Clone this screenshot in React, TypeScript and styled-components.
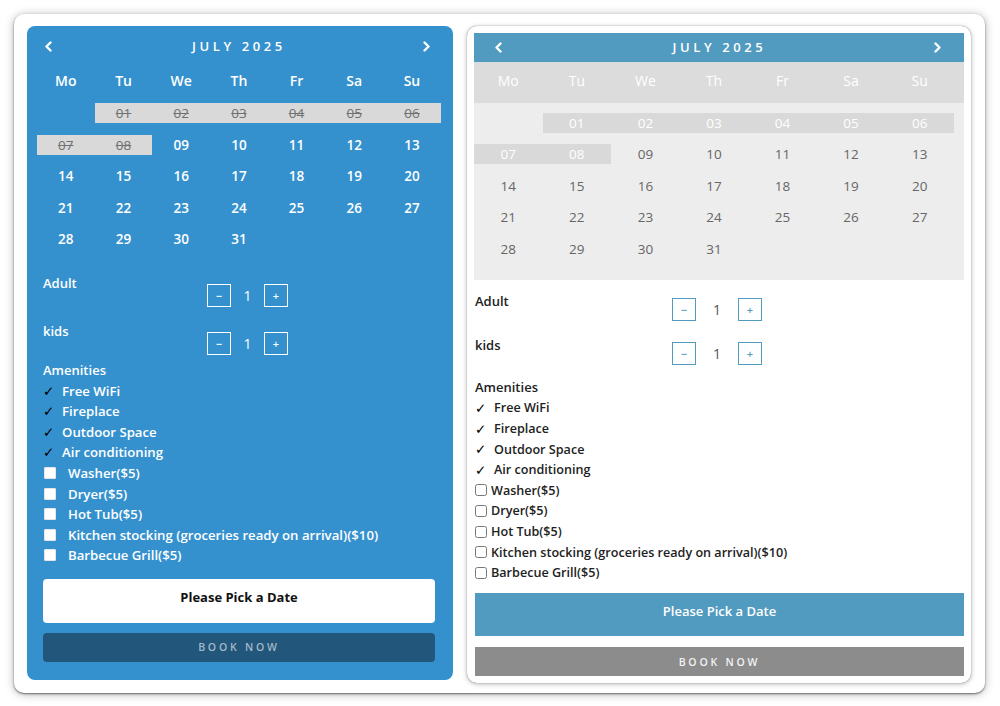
import React from "react";
import styled, { createGlobalStyle, css } from "styled-components";

type V = "blue" | "light";

const Global = createGlobalStyle`
  html, body { margin: 0; padding: 0; background: #fff; }
  body { font-family: "Open Sans", "Liberation Sans", sans-serif; }
  * { box-sizing: border-box; }
`;

const Frame = styled.div`
  margin: 14px;
  width: 971px;
  height: 679px;
  border-radius: 10px;
  background: #fff;
  box-shadow: 0 1px 2px rgba(0, 0, 0, 0.5), 0 1px 10px rgba(0, 0, 0, 0.3);
  padding: 12px 14px 10px 13px;
  display: flex;
  gap: 14px;
  align-items: flex-start;
`;

const Panel = styled.div<{ $v: V }>`
  display: flex;
  flex-direction: column;
  ${(p) =>
    p.$v === "blue"
      ? css`
          width: 426px;
          height: 654px;
          background: #3591ce;
          border-radius: 8px;
          padding: 11px 12px 19px 10px;
          color: #fff;
        `
      : css`
          width: 504px;
          height: 657px;
          background: #fff;
          border-radius: 10px;
          box-shadow: 0 0 1px rgba(0, 0, 0, 0.5), 0 1px 5px rgba(0, 0, 0, 0.3);
          padding: 7px;
          color: #222;
        `}
`;

const CalHeader = styled.div<{ $v: V }>`
  display: flex;
  align-items: center;
  justify-content: space-between;
  ${(p) =>
    p.$v === "blue"
      ? css`
          width: 404px;
          height: 24px;
          padding: 0 10px 0 7px;
        `
      : css`
          height: 29px;
          background: #529bc0;
          color: #fff;
          padding: 0 22px 0 20px;
        `}
`;

const Title = styled.div`
  font-size: 13px;
  font-weight: 600;
  letter-spacing: 3.6px;
  padding-left: 3px;
`;

const Chevron = styled.svg`
  width: 9px;
  height: 11px;
  display: block;
`;

const WeekRow = styled.div<{ $v: V }>`
  display: grid;
  align-items: center;
  justify-items: center;
  font-size: 14px;
  ${(p) =>
    p.$v === "blue"
      ? css`
          grid-template-columns: repeat(7, 57.7px);
          height: 20px;
          margin-top: 15.5px;
          font-weight: 600;
        `
      : css`
          grid-template-columns: repeat(7, 68.57px);
          height: 42px;
          padding-bottom: 3px;
          background: #dcdcdc;
          color: #fff;
          font-weight: 500;
        `}
`;

const DaysGrid = styled.div<{ $v: V }>`
  display: grid;
  grid-auto-rows: 20px;
  row-gap: 11.5px;
  ${(p) =>
    p.$v === "blue"
      ? css`
          grid-template-columns: repeat(7, 57.7px);
          margin-top: 13.5px;
        `
      : css`
          grid-template-columns: repeat(7, 68.57px);
          background: #ededed;
          padding: 10px 10px 21px 0;
        `}
`;

const Day = styled.div<{ $v: V; $off?: boolean }>`
  display: flex;
  align-items: center;
  justify-content: center;
  font-size: 13.5px;
  font-weight: 600;
  ${(p) =>
    p.$v === "blue"
      ? css`
          color: #fff;
        `
      : css`
          color: #666;
          font-weight: 500;
        `}
  ${(p) =>
    p.$off &&
    (p.$v === "blue"
      ? css`
          background: #d9d9d9;
          color: #707070;
          text-decoration: line-through;
          font-weight: 500;
        `
      : css`
          background: #d9d9d9;
          color: #fff;
        `)}
`;

const Form = styled.div<{ $v: V }>`
  display: flex;
  flex-direction: column;
  ${(p) =>
    p.$v === "blue"
      ? css`
          padding: 0 6px;
          margin-top: 25px;
        `
      : css`
          margin-top: 13px;
          padding-left: 1px;
        `}
`;

const FieldRow = styled.div<{ $v: V }>`
  display: grid;
  align-items: start;
  ${(p) =>
    p.$v === "blue"
      ? css`
          grid-template-columns: 164px auto;
          & + & {
            margin-top: 8.5px;
          }
        `
      : css`
          grid-template-columns: 197px auto;
          & + & {
            margin-top: 15.5px;
          }
        `}
`;

const Label = styled.div<{ $v: V }>`
  font-size: 13px;
  font-weight: 600;
  line-height: 17px;
  padding-top: ${(p) => (p.$v === "blue" ? "1px" : "0")};
`;

const Stepper = styled.div<{ $v: V }>`
  display: flex;
  align-items: center;
  margin-top: ${(p) => (p.$v === "blue" ? "9.5px" : "5.5px")};
`;

const StepBtn = styled.div<{ $v: V }>`
  width: 24px;
  height: 23px;
  display: flex;
  align-items: center;
  justify-content: center;
  font-size: 11px;
  font-weight: 600;
  ${(p) =>
    p.$v === "blue"
      ? css`
          border: 1px solid #fff;
          color: #fff;
        `
      : css`
          border: 1px solid #529bc0;
          color: #529bc0;
        `}
`;

const StepVal = styled.div<{ $v: V }>`
  text-align: center;
  font-size: 14px;
  ${(p) =>
    p.$v === "blue"
      ? css`
          width: 33px;
          color: #fff;
        `
      : css`
          width: 42px;
          color: #555;
        `}
`;

const AmenTitle = styled.div<{ $v: V }>`
  font-size: 13px;
  font-weight: 600;
  line-height: 20.6px;
  margin-top: ${(p) => (p.$v === "blue" ? "5.2px" : "11.7px")};
`;

const Item = styled.div<{ $v: V }>`
  display: flex;
  align-items: center;
  height: 20.6px;
  font-size: ${(p) => (p.$v === "blue" ? "13.2px" : "12.6px")};
  font-weight: 600;
`;

const Check = styled.span`
  width: 19px;
  color: #000;
  font-family: "DejaVu Sans", sans-serif;
  font-size: 13.5px;
  font-weight: 700;
`;

const Box = styled.input<{ $v: V }>`
  width: 12px;
  height: 12px;
  margin: 0;
  ${(p) =>
    p.$v === "blue"
      ? css`
          margin-left: 1px;
          margin-right: 12px;
          appearance: none;
          background: #fff;
          border: 1px solid #e6e6e6;
          border-radius: 1px;
        `
      : css`
          margin-right: 4px;
        `}
`;

const PickBtn = styled.div<{ $v: V }>`
  display: flex;
  justify-content: center;
  font-size: 13px;
  ${(p) =>
    p.$v === "blue"
      ? css`
          margin-top: 13.2px;
          height: 44px;
          background: #fff;
          color: #111;
          border-radius: 4px;
          padding-top: 9px;
          font-weight: 700;
        `
      : css`
          margin-top: 10px;
          height: 43px;
          background: #529bc0;
          color: #fff;
          padding-top: 9px;
          font-weight: 600;
        `}
`;

const BookBtn = styled.div<{ $v: V }>`
  display: flex;
  align-items: center;
  justify-content: center;
  height: 29px;
  font-size: 10.5px;
  font-weight: 600;
  letter-spacing: 2.8px;
  ${(p) =>
    p.$v === "blue"
      ? css`
          margin-top: 10px;
          background: #22567a;
          color: #a3b9cb;
          border-radius: 4px;
        `
      : css`
          margin-top: 11px;
          background: #8c8c8c;
          color: #f2f2f2;
        `}
`;

const weekdays = ["Mo", "Tu", "We", "Th", "Fr", "Sa", "Su"];
const included = ["Free WiFi", "Fireplace", "Outdoor Space", "Air conditioning"];
const extras = [
  "Washer($5)",
  "Dryer($5)",
  "Hot Tub($5)",
  "Kitchen stocking (groceries ready on arrival)($10)",
  "Barbecue Grill($5)",
];

const pad = (n: number) => (n < 10 ? `0${n}` : `${n}`);

const ChevronIcon: React.FC<{ dir: "l" | "r" }> = ({ dir }) => (
  <Chevron viewBox="0 0 9 11">
    <path
      d={dir === "l" ? "M6.5 1.5 L2.5 5.5 L6.5 9.5" : "M2.5 1.5 L6.5 5.5 L2.5 9.5"}
      fill="none"
      stroke="#fff"
      strokeWidth="2.4"
      strokeLinecap="round"
      strokeLinejoin="round"
    />
  </Chevron>
);

const Booking: React.FC<{ v: V }> = ({ v }) => {
  const cells: (number | null)[] = [null];
  for (let d = 1; d <= 31; d++) cells.push(d);
  return (
    <Panel $v={v}>
      <CalHeader $v={v}>
        <ChevronIcon dir="l" />
        <Title>JULY 2025</Title>
        <ChevronIcon dir="r" />
      </CalHeader>
      <WeekRow $v={v}>
        {weekdays.map((w) => (
          <span key={w}>{w}</span>
        ))}
      </WeekRow>
      <DaysGrid $v={v}>
        {cells.map((d, i) =>
          d === null ? (
            <Day key={i} $v={v} />
          ) : (
            <Day key={i} $v={v} $off={d <= 8}>
              {pad(d)}
            </Day>
          )
        )}
      </DaysGrid>
      <Form $v={v}>
        {["Adult", "kids"].map((l) => (
          <FieldRow key={l} $v={v}>
            <Label $v={v}>{l}</Label>
            <Stepper $v={v}>
              <StepBtn $v={v}>−</StepBtn>
              <StepVal $v={v}>1</StepVal>
              <StepBtn $v={v}>+</StepBtn>
            </Stepper>
          </FieldRow>
        ))}
        <AmenTitle $v={v}>Amenities</AmenTitle>
        {included.map((a) => (
          <Item key={a} $v={v}>
            <Check>✓</Check>
            {a}
          </Item>
        ))}
        {extras.map((a) => (
          <Item key={a} $v={v}>
            <Box type="checkbox" $v={v} />
            {a}
          </Item>
        ))}
        <PickBtn $v={v}>Please Pick a Date</PickBtn>
        <BookBtn $v={v}>BOOK NOW</BookBtn>
      </Form>
    </Panel>
  );
};

export default function App() {
  return (
    <>
      <Global />
      <Frame>
        <Booking v="blue" />
        <Booking v="light" />
      </Frame>
    </>
  );
}
